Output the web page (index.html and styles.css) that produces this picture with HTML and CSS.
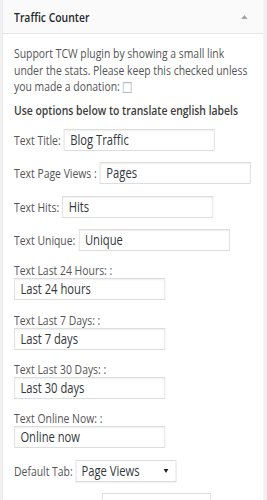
FILE: index.html
```html
<!DOCTYPE html>
<html>
<head>
<meta charset="utf-8">
<link rel="stylesheet" href="styles.css">
</head>
<body>
<div class="frame">
<div class="widget">
  <div class="widget-top">
    <h3 class="widget-title">Traffic Counter</h3>
    <span class="toggle"></span>
  </div>
  <div class="widget-inside">
    <p class="intro">Support TCW plugin by showing a small link under the stats. Please keep this checked unless you made a donation: <span class="check"></span></p>
    <p class="heading">Use options below to translate english labels</p>
    <p class="row"><label>Text Title:</label><span class="input">Blog Traffic</span></p>
    <p class="row"><label>Text Page Views :</label><span class="input">Pages</span></p>
    <p class="row"><label>Text Hits:</label><span class="input">Hits</span></p>
    <p class="row"><label>Text Unique:</label><span class="input">Unique</span></p>
    <p class="stack"><label>Text Last 24 Hours: :</label><span class="input">Last 24 hours</span></p>
    <p class="stack"><label>Text Last 7 Days: :</label><span class="input">Last 7 days</span></p>
    <p class="stack"><label>Text Last 30 Days: :</label><span class="input">Last 30 days</span></p>
    <p class="stack"><label>Text Online Now: :</label><span class="input">Online now</span></p>
    <p class="row"><label>Default Tab:</label><span class="select">Page Views<span class="caret"></span></span></p>
    <p class="row row-last"><span class="indent"></span><span class="select select-wide"></span></p>
  </div>
</div>
</div>
</body>
</html>
```
FILE: styles.css
```css
html, body {
  margin: 0;
  padding: 0;
  background: #f1f1f1;
  font-family: "Open Sans", "Noto Sans", sans-serif;
  color: #555;
}
.frame {
  width: 267px;
  height: 500px;
  overflow: hidden;
}
.widget {
  margin-left: 2px;
  width: 327.5px;
  box-sizing: border-box;
  border: 1px solid #e5e5e5;
  border-top: none;
  background: #fff;
  height: 520px;
  overflow: hidden;
  transform: scaleX(0.8);
  transform-origin: 0 0;
}
.widget-top {
  height: 33px;
  background: #fafafa;
  border-bottom: 1px solid #e5e5e5;
  display: flex;
  align-items: center;
  justify-content: space-between;
  padding: 0 20px 0 14px;
}
.widget-title {
  margin: 0;
  font-size: 13px;
  font-weight: 600;
  color: #23282d;
}
.toggle {
  width: 0;
  height: 0;
  border-left: 4px solid transparent;
  border-right: 4px solid transparent;
  border-bottom: 4px solid #a0a5aa;
}
.widget-inside {
  padding: 11px 14px 0 14px;
  font-size: 13px;
}
p {
  margin: 0;
}
.intro {
  line-height: 16.5px;
  margin-bottom: 7.5px;
}
.check {
  display: inline-block;
  box-sizing: border-box;
  width: 11px;
  height: 11px;
  border: 1px solid #b4b9be;
  background: #fff;
  vertical-align: -2px;
  box-shadow: inset 0 1px 2px rgba(0,0,0,.07);
}
.heading {
  font-weight: 600;
  line-height: 16px;
  color: #3c3c3c;
  margin-bottom: 11px;
}
.row {
  display: flex;
  align-items: center;
  gap: 4px;
  height: 22px;
  margin-bottom: 11.33px;
}
.row-last {
  margin-top: 1.5px;
}
.stack {
  display: flex;
  flex-direction: column;
  align-items: flex-start;
  margin-bottom: 11.33px;
}
.stack label {
  line-height: 16px;
}
.input {
  box-sizing: border-box;
  width: 189px;
  height: 22px;
  border: 1px solid #ddd;
  box-shadow: inset 0 1px 2px rgba(0,0,0,.07);
  background: #fff;
  color: #32373c;
  font-size: 14px;
  line-height: 20px;
  padding: 0 7px;
}
.select {
  box-sizing: border-box;
  width: 126px;
  height: 22px;
  border: 1px solid #ddd;
  box-shadow: 0 1px 1px rgba(0,0,0,.06);
  background: #fff;
  color: #32373c;
  font-size: 14px;
  line-height: 20px;
  padding: 0 9px 0 6px;
  display: flex;
  justify-content: space-between;
  align-items: center;
}
.select-wide {
  width: 136px;
}
.caret {
  width: 0;
  height: 0;
  border-left: 3px solid transparent;
  border-right: 3px solid transparent;
  border-top: 4px solid #222;
}
.indent {
  width: 106px;
}
```
